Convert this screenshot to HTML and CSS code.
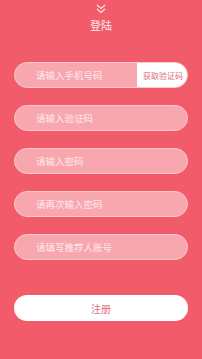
FILE: index.html
```html
<!DOCTYPE html>
<html>
<head>
  <meta charset="UTF-8">
  <title>注册</title>
  <link rel="stylesheet" href="styles.css">
</head>
<body>
  <div class="page">
    <div class="header">
      <svg class="chevron" width="12" height="10" viewBox="0 0 12 10">
        <path d="M2 1 L6 4.5 L10 1 M2 5 L6 8.5 L10 5" fill="none" stroke="#fde6e8" stroke-width="1.2"/>
      </svg>
      <div class="title">登陆</div>
    </div>

    <div class="form">
      <div class="field with-btn">
        <input type="text" placeholder="请输入手机号码">
        <button class="code-btn">获取验证码</button>
      </div>
      <div class="field">
        <input type="text" placeholder="请输入验证码">
      </div>
      <div class="field">
        <input type="password" placeholder="请输入密码">
      </div>
      <div class="field">
        <input type="password" placeholder="请再次输入密码">
      </div>
      <div class="field">
        <input type="text" placeholder="请填写推荐人账号">
      </div>
    </div>

    <button class="submit">注册</button>
  </div>
</body>
</html>
```

FILE: styles.css
```css
html, body {
  margin: 0;
  padding: 0;
  height: 100%;
}
body {
  background-color: #f25c6a;
  font-family: "Noto Sans CJK SC", "Noto Sans", sans-serif;
}
.page {
  padding: 0 14px;
}
.header {
  display: flex;
  flex-direction: column;
  align-items: center;
  padding-top: 4px;
}
.chevron {
  display: block;
}
.title {
  color: #fde8ea;
  font-size: 11px;
  line-height: 14px;
  margin-top: 4px;
}
.form {
  margin-top: 30px;
  display: flex;
  flex-direction: column;
  gap: 17px;
}
.field {
  display: flex;
  height: 26px;
  box-sizing: border-box;
  border: 1px solid #fbc7cc;
  border-radius: 13px;
  background-color: #f8a7af;
  overflow: hidden;
}
.field input {
  flex: 1;
  min-width: 0;
  border: none;
  outline: none;
  background: transparent;
  padding: 0 0 0 21px;
  font-family: inherit;
  font-size: 9.5px;
  color: #fff;
}
.field input::placeholder {
  color: #fde9eb;
}
.code-btn {
  width: 50px;
  border: none;
  background-color: #fff;
  color: #e0707b;
  font-family: inherit;
  font-size: 8px;
  padding: 0 0 0 2px;
}
.submit {
  display: block;
  width: 100%;
  height: 26px;
  margin-top: 35px;
  border: none;
  border-radius: 13px;
  background-color: #fff;
  color: #df6e79;
  font-family: inherit;
  font-size: 10px;
}
```
